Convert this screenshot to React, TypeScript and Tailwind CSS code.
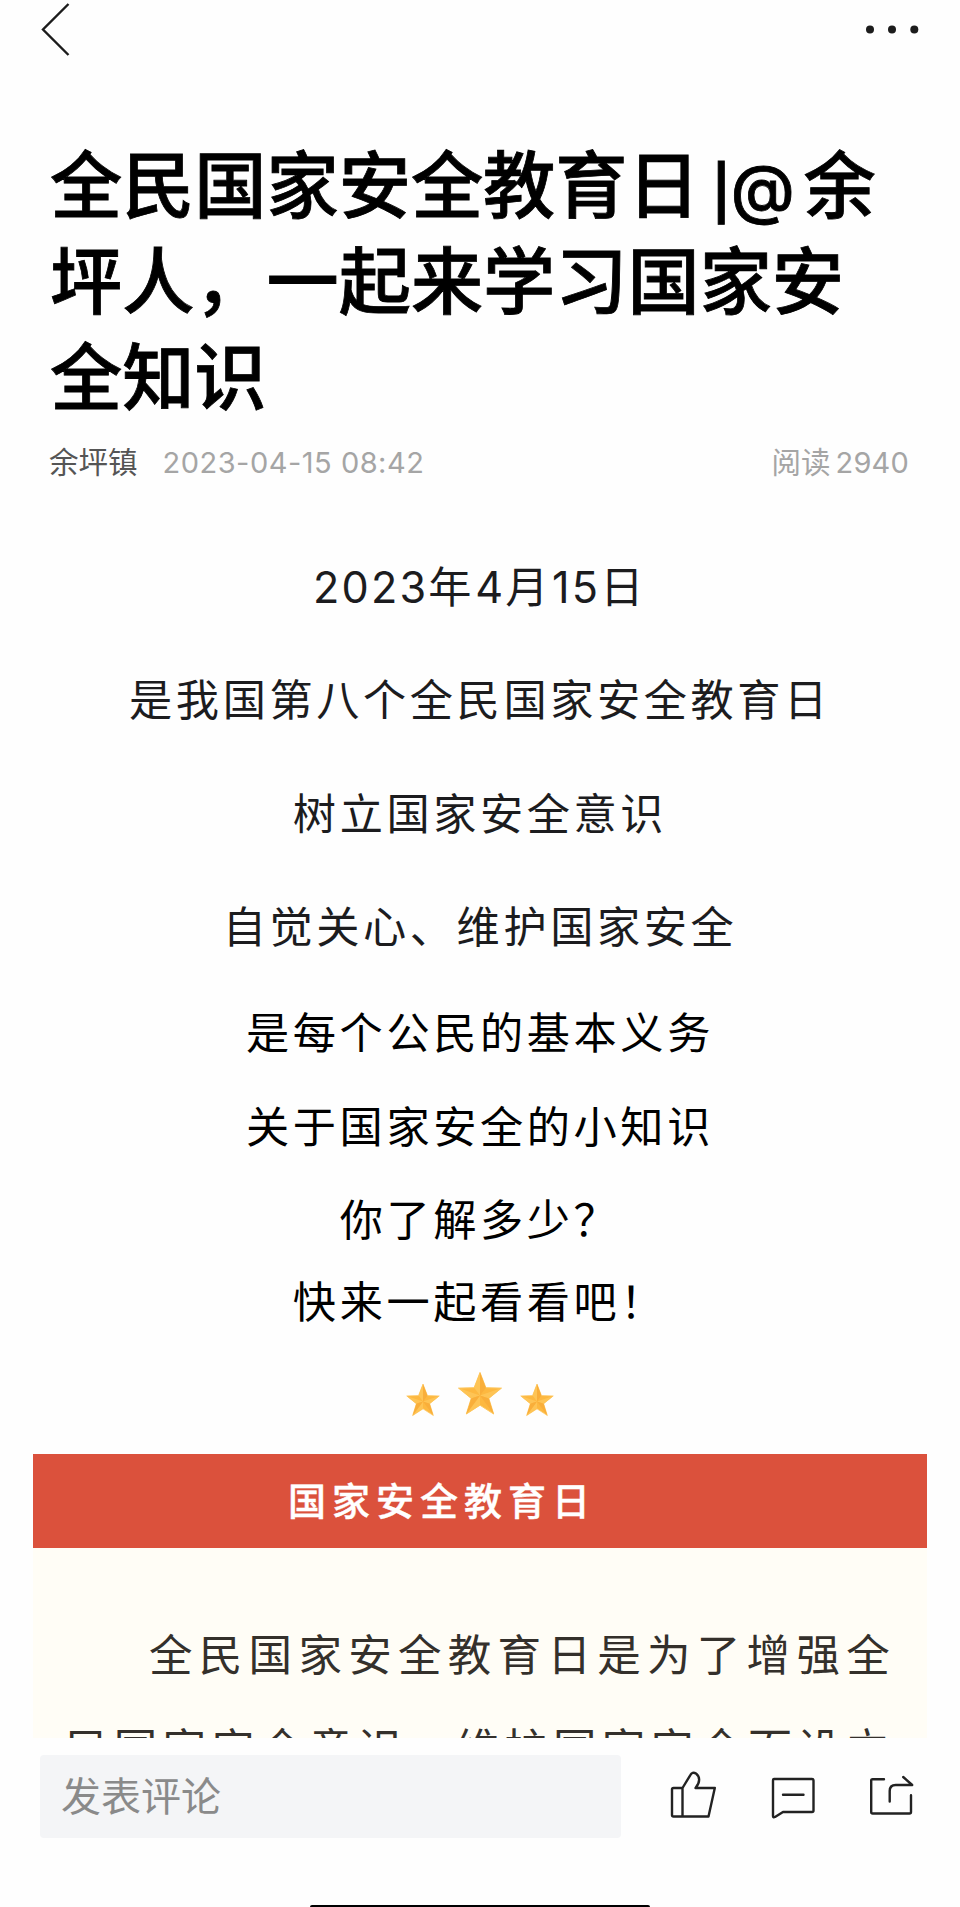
import type { ReactNode } from "react";
import clsx from "clsx";

interface IntroLine {
  text: ReactNode;
  className: string;
}

const introLines: IntroLine[] = [
  {
    text: (
      <>
        <span className="tracking-[2.200px]">2023</span>年<span className="tracking-[2.200px]">4</span>月
        <span className="tracking-[2.200px]">15</span>日
      </>
    ),
    className: "h-[113px] text-[#1c1c1e]",
  },
  { text: "是我国第八个全民国家安全教育日", className: "h-[114px] text-[#1c1c1e]" },
  { text: "树立国家安全意识", className: "h-[113px] text-[#1c1c1e]" },
  { text: "自觉关心、维护国家安全", className: "h-[106px] text-[#1c1c1e]" },
  { text: "是每个公民的基本义务", className: "h-[94px] text-black" },
  { text: "关于国家安全的小知识", className: "h-[93px] text-black" },
  { text: "你了解多少？", className: "h-[82px] text-black" },
  { text: "快来一起看看吧！", className: "h-[70px] text-black" },
];

function Star({ className }: { className?: string }) {
  return (
    <svg viewBox="0 0 48 46" className={className}>
      <path
        d="M24 1.500 30 17 46 17.500 33 28 38 44 24 35 10 44 15 28 2 17.500 18 17Z"
        fill="#fdb840"
        stroke="#fdc964"
        strokeWidth="1"
        strokeLinejoin="round"
      />
      {/* 星星的明暗面 */}
      <path d="M24 1.500 24 25 18 17ZM2 17.500 24 25 15 28ZM24 25 33 28 46 17.500ZM24 25 24 35 10 44Z" fill="#fec455" />
      <path d="M24 1.500 30 17 24 25ZM24 25 33 28 38 44ZM24 25 15 28 10 44Z" fill="#f9ae3a" />
    </svg>
  );
}

function Header() {
  return (
    <header className="flex h-[60px] items-start justify-between pl-10 pr-10">
      <button aria-label="返回">
        <svg width="32" height="60" viewBox="0 0 32 60" fill="none" stroke="#1c1c1c" strokeWidth="2.400">
          <path d="M28.500 4 3 29.500 28.500 55" />
        </svg>
      </button>
      <button aria-label="更多">
        <svg width="60" height="60" viewBox="0 0 60 60" fill="#1c1c1c">
          <circle cx="10" cy="29.500" r="4" />
          <circle cx="32" cy="29.500" r="4" />
          <circle cx="54.300" cy="29.500" r="4" />
        </svg>
      </button>
    </header>
  );
}

function CommentBar() {
  return (
    <footer className="flex h-[169px] flex-col justify-between bg-[#fefefe]">
      <div className="flex items-center pl-10 pt-[17px]">
        <div className="flex h-[83px] w-[581px] items-center rounded bg-[#f4f5f7] pl-[21px] text-[40px] leading-none text-[#8a8a8a]">
          发表评论
        </div>
        <div className="flex h-[83px] w-[339px] items-center text-[#222]">
          <svg width="339" height="83" viewBox="621 1755 339 83" fill="none" stroke="currentColor" strokeWidth="2.400" strokeLinejoin="round" strokeLinecap="round">
            {/* 点赞 */}
            <path d="M682.500 1788h-9q-1.500 0-1.500 1.500v25.500q0 1.500 1.500 1.500h35l6.300-28.500h-19.300c5-5.500 4.500-11.500.5-14.500-2.500-1.500-4.500-.8-5.500 1.300zM682.500 1788v28.500" />
            {/* 评论 */}
            <path d="M774 1779h38q1.500 0 1.500 1.500v30q0 1.500-1.500 1.500h-29l-8 5q-2 .8-2-1v-35.500q0-1.500 1-1.500zM783 1794.700h20.500" />
            {/* 分享 */}
            <path d="M884 1779.300h-11.500q-1.300 0-1.300 1.300v31.400q0 1.500 1.500 1.500h36.800q1.500 0 1.500-1.500v-16.700M889.700 1801.500v-10.500q0-6 6-6h16.500l-9-8" />
          </svg>
        </div>
      </div>
      <div className="mx-auto h-[2px] w-[340px] rounded-t-[2px] bg-black" />
    </footer>
  );
}

export default function App() {
  return (
    <div className="flex h-[1907px] w-[960px] flex-col overflow-hidden bg-[#fefefe] font-['Inter','Noto_Sans_CJK_SC',sans-serif]">
      <Header />

      <main className="h-[1678px] overflow-hidden">
        <h1 className="mt-[78px] pl-[50px] text-[72.200px] leading-[96px] font-medium whitespace-nowrap text-black [-webkit-text-stroke:0.800px_black]">
          <span className="block h-24">
            全民国家安全教育日
            <span className="ml-[12px] text-[53px] font-semibold">|</span>
            <span className="mr-[9px] text-[65px]">@</span>余
          </span>
          <span className="block h-24">坪人，一起来学习国家安</span>
          <span className="block h-24">全知识</span>
        </h1>

        <div className="flex h-[75px] items-center justify-between pr-[51px] pb-[2px] pl-[49px] text-[29.500px] text-[#a5a5a5]">
          <div className="flex items-center">
            <span className="text-[#555]">余坪镇</span>
            <span className="ml-[25px] text-[29px] tracking-[0.500px]">2023-04-15 08:42</span>
          </div>
          <div className="flex items-center">
            阅读<span className="ml-[5px] text-[29px] tracking-[0.200px]">2940</span>
          </div>
        </div>

        <div className="mt-[51px] text-center text-[43.200px] leading-[70px] tracking-[3.600px] whitespace-nowrap">
          {introLines.map((line, index) => (
            <p key={index} className={clsx("overflow-hidden", line.className)}>
              {line.text}
            </p>
          ))}
        </div>

        <div className="flex h-[81px] items-end justify-center gap-[15px] pb-px">
          <Star className="h-[34px] w-[36px]" />
          <Star className="mb-px h-[45px] w-[48px]" />
          <Star className="h-[34px] w-[36px]" />
        </div>

        <section className="mx-[33px] mt-[36px] bg-[#fffdf6]">
          <h2 className="h-[94px] bg-[#db513c] pl-[255px] text-[38px] leading-[94px] font-medium tracking-[6px] text-white [-webkit-text-stroke:0.400px_white]">
            国家安全教育日
          </h2>
          <div className="h-[300px] pt-[60px] text-[43.500px] leading-[94px] whitespace-nowrap text-[#34302b]">
            <p className="h-[94px] pl-[116px] tracking-[6.300px]">全民国家安全教育日是为了增强全</p>
            <p className="h-[94px] pl-[32px] tracking-[5.300px]">民国家安全意识，维护国家安全而设立</p>
          </div>
        </section>
      </main>

      <CommentBar />
    </div>
  );
}
